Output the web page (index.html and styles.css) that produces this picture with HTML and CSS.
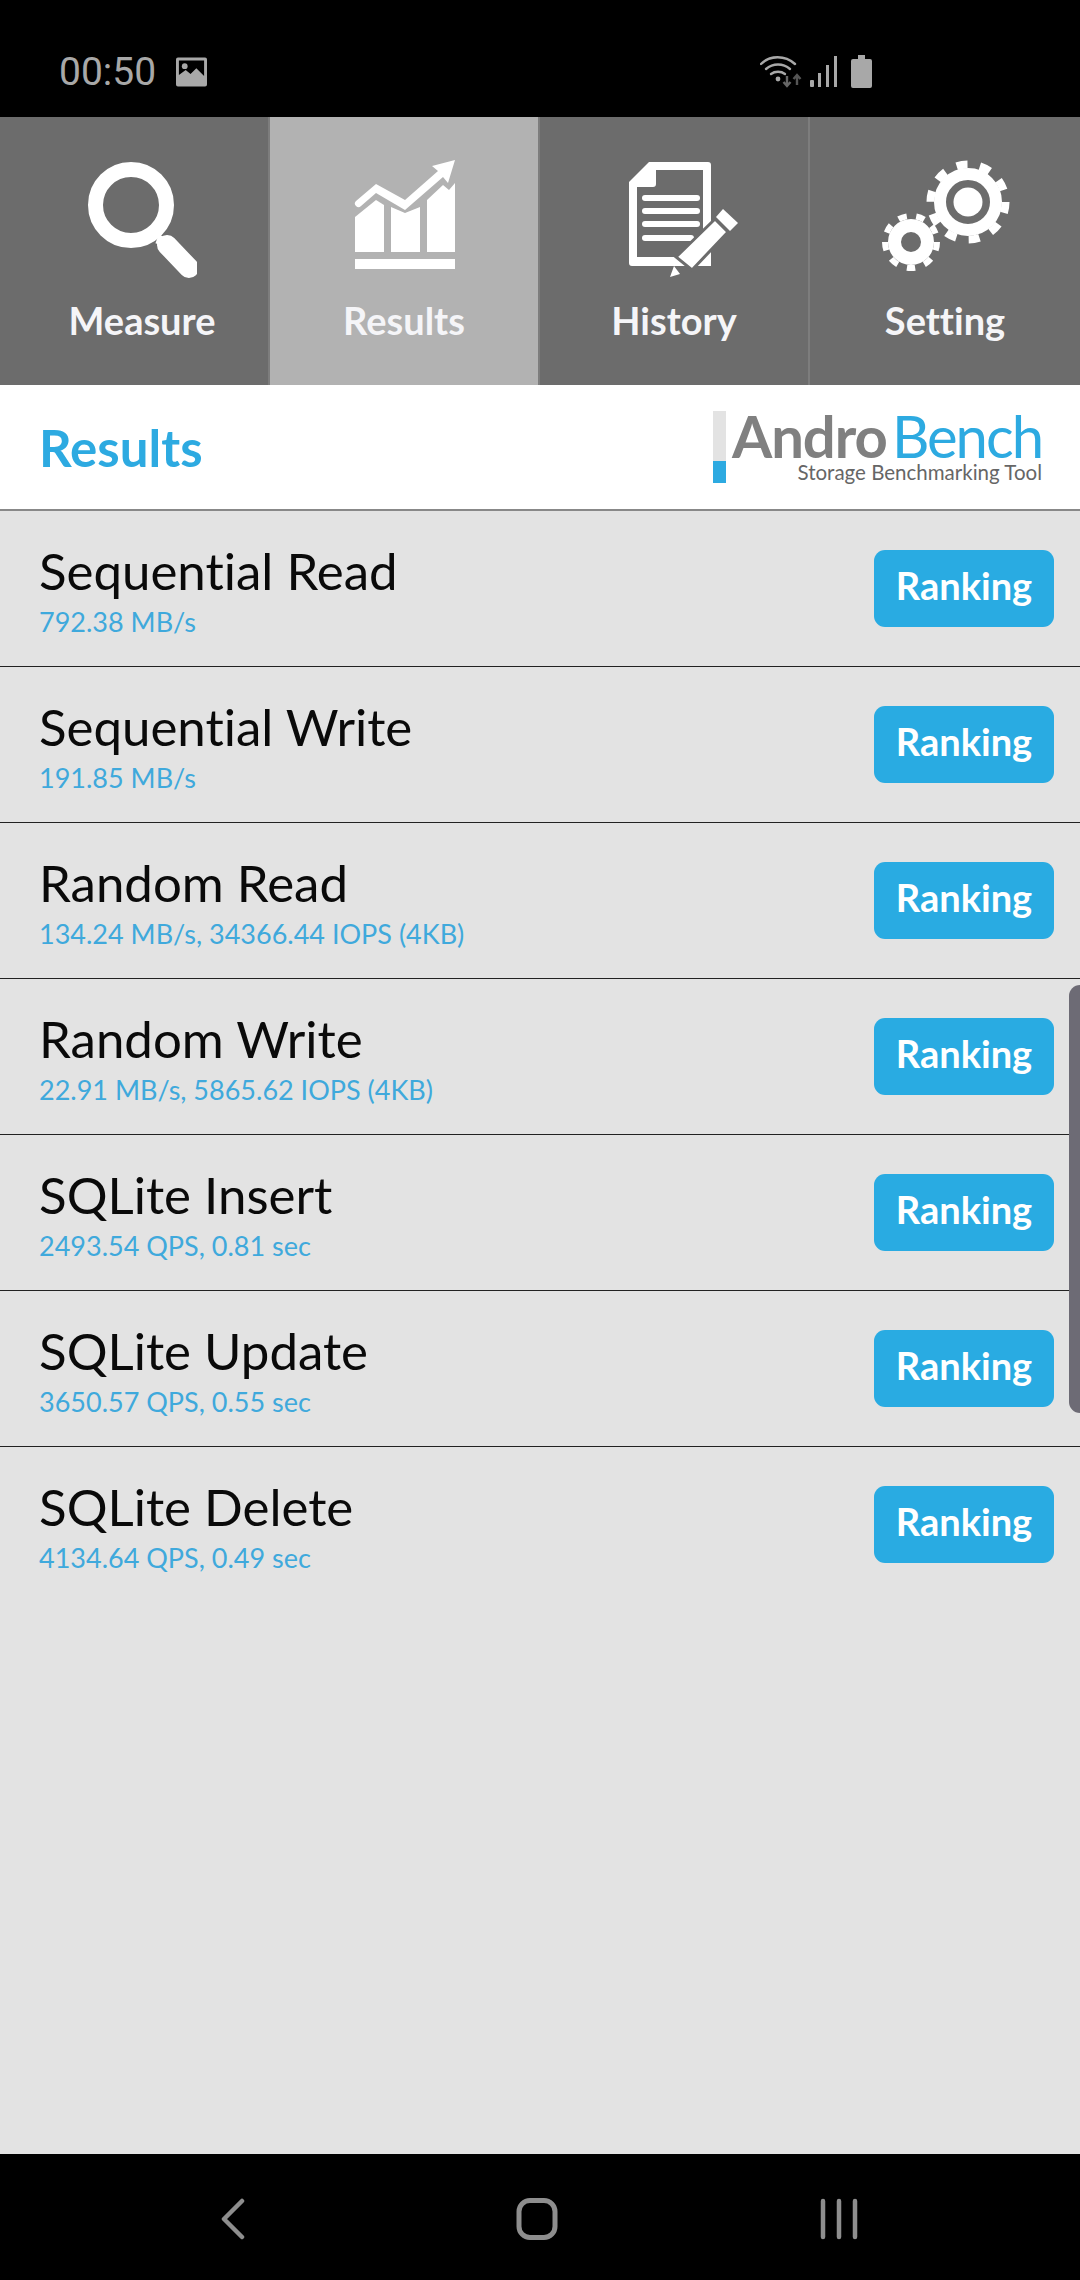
FILE: index.html
```html
<!DOCTYPE html>
<html lang="en">
<head>
<meta charset="utf-8">
<title>AndroBench</title>
<link rel="stylesheet" href="styles.css">
</head>
<body>
<div class="app">
  <header class="status">
    <div class="status-left">
      <span class="clock">00:50</span>
      <svg class="pic" width="31" height="30" viewBox="0 0 32 30"><path fill="#a8a8a8" fill-rule="evenodd" d="M2 0h28a2 2 0 0 1 2 2v26a2 2 0 0 1-2 2H2a2 2 0 0 1-2-2V2a2 2 0 0 1 2-2zM3 3v15l7-5 5 4 6-6 8 8V3z"/><circle cx="9" cy="9" r="3" fill="#a8a8a8"/></svg>
    </div>
    <div class="status-right">
      <svg width="42" height="33" viewBox="0 0 42 33"><g fill="none" stroke="#a8a8a8" stroke-width="2.400" stroke-linecap="round"><path d="M1 9C10 0 25 0 35 9"/><path d="M6 14c7-6 17-6 24 0"/><path d="M11 19c4-3 10-3 14 0"/></g><circle cx="18" cy="24" r="2.400" fill="#a8a8a8"/><path d="M27 21v9M23.500 27l3.500 4 3.500-4" fill="none" stroke="#666" stroke-width="2.400"/><path d="M37 30v-9M33.500 24l3.500-4 3.500 4" fill="none" stroke="#555" stroke-width="2.400"/></svg>
      <svg class="signal" width="27" height="31" viewBox="0 0 27 31"><rect x="0" y="24" width="4" height="7" rx="1" fill="#a8a8a8"/><rect x="8" y="17" width="3" height="14" fill="#a8a8a8"/><rect x="16" y="9" width="3" height="22" fill="#a8a8a8"/><rect x="24" y="0" width="3" height="31" fill="#a8a8a8"/></svg>
      <svg class="battery" width="21" height="33" viewBox="0 0 21 33"><path fill="#a8a8a8" d="M7 0h7v4h5a2 2 0 0 1 2 2v25a2 2 0 0 1-2 2H2a2 2 0 0 1-2-2V6a2 2 0 0 1 2-2h5z"/></svg>
    </div>
  </header>

  <nav class="tabs">
    <div class="tab tab-first">
      <svg class="tab-icon" width="110" height="120" viewBox="0 0 110 120"><circle cx="44" cy="45" r="35.500" fill="none" stroke="#fff" stroke-width="15"/><path d="M70 79l8 3" stroke="#fff" stroke-width="9"/><path d="M80 85l22 23" stroke="#fff" stroke-width="20" stroke-linecap="round"/></svg>
      <span class="tab-label">Measure</span>
    </div>
    <div class="tab tab-active">
      <svg class="tab-icon" width="110" height="120" viewBox="0 0 110 120"><g fill="#fff"><path d="M6 57L27 40l8 5v47H6z"/><path d="M42 47l14 6 15-6v45H42z"/><path d="M78 40l16-15 6 5 6-7v69H78z"/><rect x="6" y="99" width="100" height="10"/><path d="M106 0L83 6l6 5-33 29-29-16-20 17a3.500 3.500 0 0 0 5 5l15-13 29 17 38-33 5 6z"/></g></svg>
      <span class="tab-label">Results</span>
    </div>
    <div class="tab">
      <svg class="tab-icon" width="130" height="120" viewBox="-10 0 130 120"><g fill="#fff"><path fill-rule="evenodd" d="M30 2h59a3 3 0 0 1 3 3v101H13a3 3 0 0 1-3-3V22zM37 10v14a3 3 0 0 1-3 3H18v70h66V10z"/><rect x="23" y="35" width="58" height="6" rx="3"/><rect x="23" y="48" width="58" height="6" rx="3"/><rect x="23" y="61" width="58" height="6" rx="3"/><rect x="23" y="75" width="52" height="6" rx="3"/></g><path d="M57 97L96 59l13 13-36 38z" fill="#fff" stroke="#6c6c6c" stroke-width="3"/><path d="M97 57l7-8 15 14-8 8z" fill="#fff"/><path d="M51 117l4-11 6 8z" fill="#fff"/></svg>
      <span class="tab-label">History</span>
    </div>
    <div class="tab">
      <svg class="tab-icon" width="130" height="120" viewBox="0 0 130 120"><g fill="none" stroke="#fff"><circle cx="88" cy="42" r="28" stroke-width="12"/><circle cx="88" cy="42" r="37.500" stroke-width="8" stroke-dasharray="11 12.560"/><circle cx="31" cy="82" r="16.500" stroke-width="13"/><circle cx="31" cy="82" r="26" stroke-width="6" stroke-dasharray="8.500 9.650"/></g><circle cx="88" cy="42" r="14.500" fill="#fff"/></svg>
      <span class="tab-label">Setting</span>
    </div>
  </nav>

  <section class="title-bar">
    <h1 class="title">Results</h1>
    <div class="logo">
      <div class="logo-bar"><span class="logo-bar-fill"></span></div>
      <div class="logo-text">
        <div class="logo-name"><span class="logo-andro">Andro</span><span class="logo-bench">Bench</span></div>
        <div class="logo-sub">Storage Benchmarking Tool</div>
      </div>
    </div>
  </section>

  <main class="list">
    <div class="row"><div class="info"><div class="name">Sequential Read</div><div class="value">792.38 MB/s</div></div><button class="rank">Ranking</button></div>
    <div class="row"><div class="info"><div class="name">Sequential Write</div><div class="value">191.85 MB/s</div></div><button class="rank">Ranking</button></div>
    <div class="row"><div class="info"><div class="name">Random Read</div><div class="value">134.24 MB/s, 34366.44 IOPS (4KB)</div></div><button class="rank">Ranking</button></div>
    <div class="row"><div class="info"><div class="name">Random Write</div><div class="value">22.91 MB/s, 5865.62 IOPS (4KB)</div></div><button class="rank">Ranking</button></div>
    <div class="row"><div class="info"><div class="name">SQLite Insert</div><div class="value">2493.54 QPS, 0.81 sec</div></div><button class="rank">Ranking</button></div>
    <div class="row"><div class="info"><div class="name">SQLite Update</div><div class="value">3650.57 QPS, 0.55 sec</div></div><button class="rank">Ranking</button></div>
    <div class="row row-last"><div class="info"><div class="name">SQLite Delete</div><div class="value">4134.64 QPS, 0.49 sec</div></div><button class="rank">Ranking</button></div>
    <div class="scroll-handle"></div>
  </main>

  <footer class="navbar">
    <svg class="nav-back" width="24" height="42" viewBox="0 0 24 42"><path d="M21 3L3 21l18 18" transform="translate(0 0)" fill="none" stroke="#8e8e8e" stroke-width="4.500" stroke-linecap="round" stroke-linejoin="round"/></svg>
    <svg class="nav-home" width="42" height="42" viewBox="0 0 42 42"><rect x="3" y="2.500" width="36" height="37" rx="11" fill="none" stroke="#8e8e8e" stroke-width="5"/></svg>
    <svg class="nav-recent" width="38" height="42" viewBox="0 0 38 42"><g stroke="#8e8e8e" stroke-width="4.500" stroke-linecap="round"><path d="M3 3v36M19 3v36M35 3v36"/></g></svg>
  </footer>
</div>
</body>
</html>
```
FILE: styles.css
```css
* { box-sizing: border-box; }
html, body { margin: 0; padding: 0; }
body { width: 1080px; height: 2280px; overflow: hidden; background: #000; font-family: Lato, "Open Sans", sans-serif; font-variant-ligatures: none; }
.app { width: 1080px; height: 2280px; display: flex; flex-direction: column; }

.status { height: 117px; flex: none; background: #000; display: flex; align-items: center; justify-content: space-between; padding: 26px 208px 0 59px; }
.status-left { display: flex; align-items: center; gap: 20px; }
.clock { font-family: Roboto, sans-serif; font-size: 39px; color: #a8a8a8; }
.status-right { display: flex; align-items: center; gap: 8px; }
.battery { margin-left: 6px; }

.tabs { height: 268px; flex: none; display: flex; background: #6c6c6c; }
.tab { width: 270px; display: flex; flex-direction: column; align-items: center; padding-top: 43px; border-right: 2px solid #7d7d7d; }
.tab:last-child { border-right: 0; }
.tab-first { padding-left: 16px; }
.tab-active { background: #b2b2b2; }
.tab-icon { display: block; height: 120px; }
.tab-label { margin-top: 16px; font-size: 38px; font-weight: 700; color: #f5f5f8; line-height: 48px; }

.title-bar { height: 124px; flex: none; background: #fff; display: flex; align-items: center; justify-content: space-between; padding: 0 38px 0 39px; }
.title { margin: 0; font-size: 51px; font-weight: 700; color: #2daae1; }
.logo { display: flex; align-items: stretch; gap: 6px; }
.logo-bar { width: 13px; height: 72px; background: #e3e3e3; display: flex; align-items: flex-end; }
.logo-bar-fill { display: block; width: 100%; height: 22px; background: #2daae1; }
.logo-name { font-size: 58px; line-height: 50px; white-space: nowrap; }
.logo-andro { color: #808080; font-weight: 700; letter-spacing: -1px; }
.logo-bench { color: #2daae1; margin-left: 5px; letter-spacing: -2px; }
.logo-sub { font-size: 20.500px; line-height: 22px; color: #666; text-align: right; white-space: nowrap; }

.list { position: relative; flex: 1; background: #e3e3e3; border-top: 2px solid #888; }
.row { height: 156px; display: flex; align-items: center; justify-content: space-between; padding: 0 26px 0 39px; border-bottom: 1px solid #222; }
.row-last { border-bottom-color: transparent; }
.info { margin-top: 10px; }
.name { font-size: 51px; line-height: 56px; color: #0a0a0a; }
.value { font-size: 27px; line-height: 46px; color: #3fa9dc; }
.rank { width: 180px; height: 77px; border: 0; border-radius: 11px; background: #29abe2; color: #fff; font-family: inherit; font-size: 38px; font-weight: 700; padding: 0 0 7px; }
.scroll-handle { position: absolute; right: 0; top: 474px; width: 11px; height: 428px; background: #6d6b75; border-radius: 11px 0 0 11px; }

.navbar { height: 126px; flex: none; background: #000; display: flex; align-items: center; justify-content: space-between; padding: 4px 222px 0 221px; }
.nav-home { margin-left: 8px; }
```
